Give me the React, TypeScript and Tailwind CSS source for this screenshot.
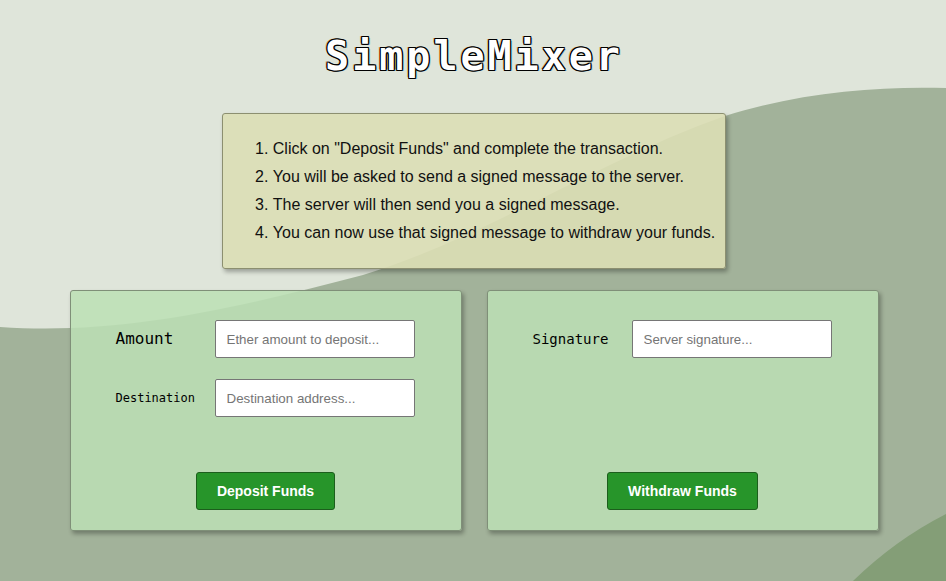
import React from 'react';

const steps = [
  'Click on "Deposit Funds" and complete the transaction.',
  'You will be asked to send a signed message to the server.',
  'The server will then send you a signed message.',
  'You can now use that signed message to withdraw your funds.',
];

function Background() {
  return (
    <svg
      className="absolute inset-0 h-full w-full"
      viewBox="0 0 946 581"
      preserveAspectRatio="none"
      aria-hidden
    >
      <rect width="946" height="581" fill="#dfe5da" />
      <path
        d="M0 327 C120 335 230 310 363 275 C480 240 600 160 725 116 C800 92 880 86 946 88 V581 H0 Z"
        fill="#a2b29a"
      />
      <path d="M853 581 Q895 540 946 514 V581 Z" fill="#849e77" />
    </svg>
  );
}

function Field({ label, size, placeholder }: { label: string; size: string; placeholder: string }) {
  return (
    <div className="flex items-center">
      <label className={`w-[99px] font-['DejaVu_Sans_Mono',monospace] text-black ${size}`}>{label}</label>
      <input
        type="text"
        placeholder={placeholder}
        className="h-[38px] w-[200px] rounded-[2px] border border-[#767676] bg-white px-[11px] font-['Liberation_Sans',Arial,sans-serif] text-[13.333px] text-black placeholder:text-[#757575] outline-none"
      />
    </div>
  );
}

function Card({ children, button }: { children: React.ReactNode; button: string }) {
  return (
    <div className="flex h-[241px] w-[392px] flex-col rounded-[3px] border border-[#7f8f78] bg-[rgba(188,223,180,0.86)] pb-[20px] pl-[45px] pt-[29px] shadow-[2px_3px_4px_rgba(0,0,0,0.3)]">
      <div className="flex flex-col gap-[21px]">{children}</div>
      <div className="mt-auto flex justify-center pr-[45px]">
        <button className="h-[38px] rounded-[3px] border border-[#1c5e1c] bg-[#27952a] px-5 text-[14px] font-bold text-white">
          {button}
        </button>
      </div>
    </div>
  );
}

export default function App() {
  return (
    <div className="relative h-screen w-full overflow-hidden font-['Liberation_Sans',Arial,sans-serif]">
      <Background />
      <div className="relative flex flex-col items-center pl-[2px]">
        <h1
          className="pt-[33px] font-['DejaVu_Sans_Mono',monospace] text-[40px] font-bold leading-[47px] tracking-[3px] text-white"
          style={{
            textShadow:
              '-1px -1px 0 #000, 1px -1px 0 #000, -1px 1px 0 #000, 1px 1px 0 #000, 0 -1px 0 #000, 0 1px 0 #000, -1px 0 0 #000, 1px 0 0 #000, -2px -1px 0 rgba(220,140,40,0.55), 2px 1px 0 rgba(60,150,210,0.45)',
          }}
        >
          SimpleMixer
        </h1>

        <div className="mt-[33px] w-[504px] rounded-[3px] border border-[#8c8f70] bg-[rgba(219,222,181,0.9)] pb-[21px] pl-[32px] pt-[21px] shadow-[2px_3px_4px_rgba(0,0,0,0.3)]">
          <ol className="list-inside list-decimal text-[16px] leading-[28px] text-[#111]">
            {steps.map((s) => (
              <li key={s}>{s}</li>
            ))}
          </ol>
        </div>

        <div className="mt-[21px] flex gap-[25px]">
          <Card button="Deposit Funds">
            <Field label="Amount" size="text-[16px]" placeholder="Ether amount to deposit..." />
            <Field label="Destination" size="text-[12px]" placeholder="Destination address..." />
          </Card>
          <Card button="Withdraw Funds">
            <Field label="Signature" size="text-[14px]" placeholder="Server signature..." />
          </Card>
        </div>
      </div>
    </div>
  );
}
